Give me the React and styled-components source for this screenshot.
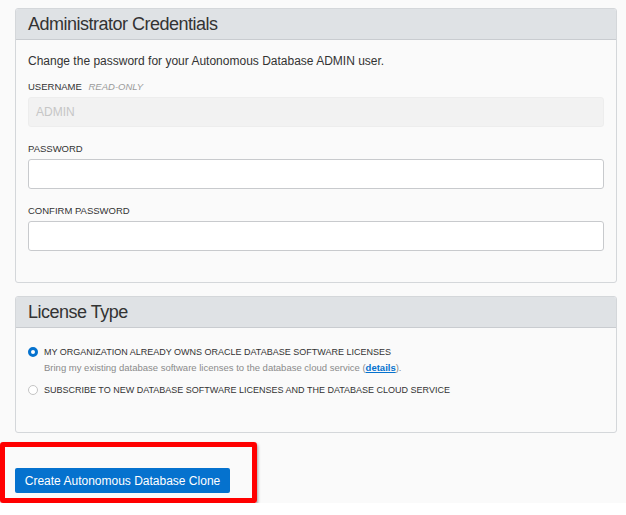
import React from 'react';
import styled, { createGlobalStyle } from 'styled-components';

const GlobalStyle = createGlobalStyle`
	body {
		margin: 0;
		background: #ffffff;
		font-family: "Liberation Sans", Arial, sans-serif;
		color: #333333;
	}
`;

const Page = styled.div`
	width: 626px;
	height: 503px;
	background: #fafafa;
	padding-top: 8px;
	box-sizing: border-box;
`;

const Panels = styled.div`
	display: flex;
	flex-direction: column;
	gap: 13px;
	padding: 0 9px 0 15px;
`;

const Panel = styled.section`
	border: 1px solid #d4d7da;
	border-radius: 3px;
	background: #fafafa;
	height: ${props => props.height}px;
	box-sizing: border-box;
	overflow: hidden;
`;

const PanelHeader = styled.h2`
	margin: 0;
	height: 31px;
	padding: 0 12px;
	display: flex;
	align-items: center;
	background: #dfe2e5;
	border-bottom: 1px solid #c9ccd0;
	font-size: 18px;
	letter-spacing: -0.5px;
	font-weight: 400;
	color: #333333;
	box-sizing: border-box;
`;

const PanelBody = styled.div`
	padding: ${props => props.top}px 12px 0 12px;
`;

const Description = styled.p`
	margin: 0 0 13px;
	font-size: 12px;
	line-height: 14px;
`;

const Label = styled.div`
	font-size: 9.5px;
	text-transform: uppercase;
	color: #333333;
	line-height: 12px;
	margin-bottom: 4px;

	em {
		margin-left: 4px;
		color: #999999;
		font-style: italic;
	}
`;

const Input = styled.div`
	height: 30px;
	border: 1px solid ${props => (props.readOnly ? '#ededed' : '#c8cacd')};
	border-radius: 3px;
	background: ${props => (props.readOnly ? '#f2f2f2' : '#ffffff')};
	box-sizing: border-box;
	display: flex;
	align-items: center;
	padding: 0 7px;
	font-size: 12px;
	color: #c6c6c6;
	margin-bottom: ${props => props.gap}px;
`;

const RadioRow = styled.div`
	display: flex;
	align-items: flex-start;
	gap: 6px;
	margin-bottom: ${props => props.gap}px;
`;

const Radio = styled.span`
	width: 10px;
	height: 10px;
	flex: none;
	border-radius: 50%;
	box-sizing: border-box;
	margin-top: 1px;
	border: ${props => (props.checked ? '3px solid #0572ce' : '1px solid #c4c4c4')};
	background: #ffffff;
`;

const RadioText = styled.div`
	font-size: 9px;
	line-height: 12px;
	color: #333333;
	text-transform: uppercase;
`;

const Hint = styled.div`
	margin-top: 4px;
	font-size: 9.5px;
	color: #8a8a8a;
	text-transform: none;

	a {
		color: #0572ce;
		font-weight: 700;
		text-decoration: underline;
	}
`;

const Footer = styled.div`
	margin-top: 9px;
`;

const Highlight = styled.div`
	width: 257px;
	height: 61px;
	border: 5px solid #ff0000;
	border-radius: 3px;
	box-shadow: 1px 2px 3px rgba(0, 0, 0, 0.35);
	box-sizing: border-box;
	padding: 21px 0 0 10px;
`;

const Button = styled.button`
	width: 215px;
	height: 25px;
	border: none;
	border-radius: 2px;
	background: #0572ce;
	color: #ffffff;
	font-family: "Liberation Sans", Arial, sans-serif;
	font-size: 12px;
	padding: 0;
	cursor: pointer;
`;

const App = () => (
	<>
		<GlobalStyle />
		<Page>
			<Panels>
				<Panel height={275}>
					<PanelHeader>Administrator Credentials</PanelHeader>
					<PanelBody top={14}>
						<Description>
							Change the password for your Autonomous Database ADMIN user.
						</Description>
						<Label>
							Username <em>Read-only</em>
						</Label>
						<Input readOnly gap={16}>ADMIN</Input>
						<Label>Password</Label>
						<Input gap={16} />
						<Label>Confirm Password</Label>
						<Input gap={0} />
					</PanelBody>
				</Panel>
				<Panel height={137}>
					<PanelHeader>License Type</PanelHeader>
					<PanelBody top={18}>
						<RadioRow gap={10}>
							<Radio checked />
							<RadioText>
								My organization already owns Oracle Database software licenses
								<Hint>
									Bring my existing database software licenses to the database cloud
									service (<a href="#details">details</a>).
								</Hint>
							</RadioText>
						</RadioRow>
						<RadioRow gap={0}>
							<Radio />
							<RadioText>
								Subscribe to new database software licenses and the database cloud
								service
							</RadioText>
						</RadioRow>
					</PanelBody>
				</Panel>
			</Panels>
			<Footer>
				<Highlight>
					<Button>Create Autonomous Database Clone</Button>
				</Highlight>
			</Footer>
		</Page>
	</>
);

export default App;
